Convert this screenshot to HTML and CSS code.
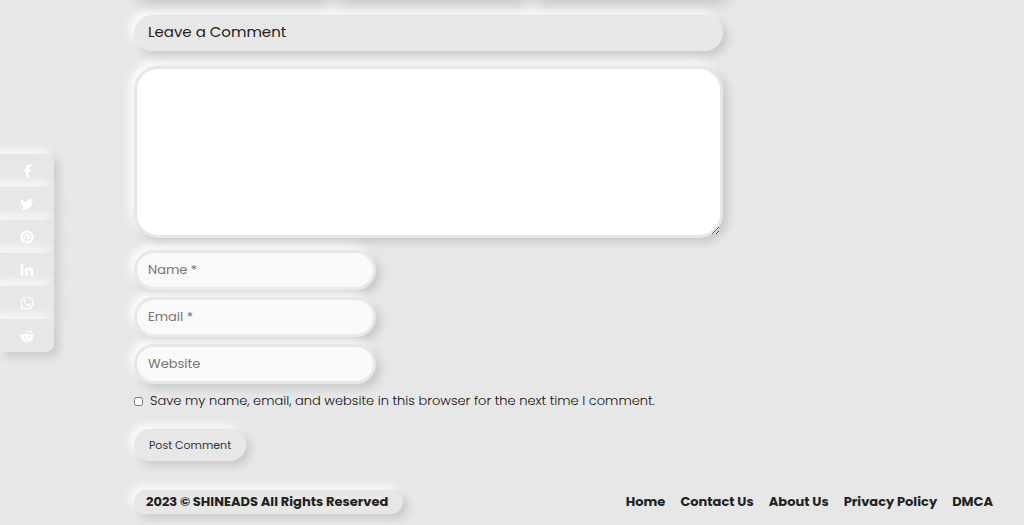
FILE: index.html
```html
<!DOCTYPE html>
<html lang="en">
<head>
    <meta charset="UTF-8">
    <meta name="viewport" content="width=device-width, initial-scale=1.0">
    <title>Leave a Comment - SHINEADS</title>
    <link rel="stylesheet" href="styles.css">
</head>
<body>
    <!-- Share bar -->
    <nav class="share-bar" aria-label="Share">
        <a href="#" class="share-link" aria-label="Facebook">
            <svg viewBox="0 0 32 32"><path d="M20 31V18h5l.8-5.300H20V9.500c0-1.700.8-2.900 3-2.900h3V1.500C24.800 1.200 23.300 1 21.800 1 17.200 1 14 3.500 14 8.300v4.400H8.500V18H14v13z"/></svg>
        </a>
        <a href="#" class="share-link" aria-label="Twitter">
            <svg viewBox="0 0 32 32"><path d="M31 7.200a12 12 0 0 1-3.500 1 6 6 0 0 0 2.700-3.400 12 12 0 0 1-3.900 1.500 6.150 6.150 0 0 0-10.500 5.600A17.500 17.500 0 0 1 3.100 5.500a6.150 6.150 0 0 0 1.900 8.200 6 6 0 0 1-2.800-.8c0 3 2.100 5.600 4.900 6.200a6 6 0 0 1-2.800.1 6.150 6.150 0 0 0 5.800 4.300A12.400 12.400 0 0 1 1 26a17.400 17.400 0 0 0 26.900-15.500A12 12 0 0 0 31 7.200z"/></svg>
        </a>
        <a href="#" class="share-link" aria-label="Pinterest">
            <svg viewBox="0 0 32 32"><path d="M16 1a15 15 0 0 0-6 28.700c-.1-1.100 0-2.400.3-3.600l1.900-8.200s-.5-1-.5-2.400c0-2.200 1.300-3.900 2.900-3.900 1.400 0 2 1 2 2.300 0 1.400-.9 3.400-1.300 5.300-.4 1.600.8 2.900 2.300 2.900 2.800 0 4.700-3.600 4.700-7.900 0-3.200-2.200-5.700-6.200-5.700-4.500 0-7.300 3.400-7.300 7.100 0 1.300.4 2.200 1 2.900.3.300.3.500.2.800l-.3 1.200c-.1.400-.4.500-.7.400-2.100-.9-3.100-3.200-3.100-5.700 0-4.300 3.600-9.400 10.700-9.400 5.700 0 9.500 4.200 9.500 8.600 0 5.900-3.300 10.300-8.100 10.300-1.600 0-3.200-.9-3.700-1.900l-1.100 4.200c-.3 1.200-1 2.400-1.600 3.300A15 15 0 1 0 16 1z"/></svg>
        </a>
        <a href="#" class="share-link" aria-label="LinkedIn">
            <svg viewBox="0 0 32 32"><path d="M1.500 11h6v18h-6zM4.500 2.500a3.300 3.300 0 1 1 0 6.600 3.300 3.300 0 0 1 0-6.600zM11.500 11h5.700v2.500c.9-1.600 2.900-3 5.700-3 6 0 7.600 3.700 7.600 9V29h-6v-8.500c0-2.500-.5-4.900-3.300-4.900-3 0-3.700 2.200-3.700 4.700V29h-6z"/></svg>
        </a>
        <a href="#" class="share-link" aria-label="WhatsApp">
            <svg viewBox="0 0 32 32"><path fill-rule="evenodd" d="M1 31l2.200-7.700A14.900 14.900 0 1 1 8.700 29zM9.300 26.100A12.300 12.300 0 1 0 5.800 22.700l-1.200 4.700z"/><path d="M11.500 8.200c-.4-.7-1.400-.7-2-.1C8.300 9.200 7.700 11 8.500 13c1.700 4.500 5.500 8.500 10.500 10 2 .6 4.500-.6 4.900-2.500.3-1.400 0-1.500-.7-1.900l-3-1.400c-.6-.3-.9-.1-1.300.4l-1.200 1.500c-.3.400-.7.400-1.200.1-2.300-1-4.100-2.700-5.300-4.900-.2-.4-.1-.7.200-1l.9-1.200c.3-.4.3-.7.100-1.200z"/></svg>
        </a>
        <a href="#" class="share-link" aria-label="Reddit">
            <svg viewBox="0 0 32 32"><path fill-rule="evenodd" d="M16 11c3.200 0 6.200.8 8.500 2.200a3.700 3.700 0 1 1 4.700 5.500c.1.500.1 1 .1 1.500C29.300 26 23.300 30 16 30S2.700 26 2.700 20.200c0-.5 0-1 .1-1.500a3.700 3.700 0 1 1 4.700-5.500A16.500 16.500 0 0 1 16 11zM11 16a2.300 2.300 0 1 0 0 4.600 2.300 2.300 0 0 0 0-4.600zm10 0a2.300 2.300 0 1 0 0 4.600 2.300 2.300 0 0 0 0-4.600zM10.500 24c3 3.300 8 3.300 11 0l-1.200-.9c-2.600 2-6 2-8.600 0z"/><circle cx="25.500" cy="6" r="2.800"/><path d="M15.500 11.500l1.800-7.300 6.500 1.300-.3 1.400-5-1-1.300 5.600z"/></svg>
        </a>
    </nav>

    <main class="content">
        <!-- Related posts -->
        <div class="related">
            <div class="related-card"></div>
            <div class="related-card"></div>
            <div class="related-card"></div>
        </div>

        <!-- Comment form -->
        <h3 class="comment-title">Leave a Comment</h3>
        <form class="comment-form">
            <textarea class="field comment-text" aria-label="Comment"></textarea>
            <input class="field" type="text" placeholder="Name *" aria-label="Name">
            <input class="field" type="email" placeholder="Email *" aria-label="Email">
            <input class="field" type="url" placeholder="Website" aria-label="Website">
            <div class="consent">
                <input type="checkbox" id="save-info">
                <label for="save-info">Save my name, email, and website in this browser for the next time I comment.</label>
            </div>
            <button type="submit" class="submit">Post Comment</button>
        </form>
    </main>

    <!-- Footer -->
    <footer class="footer">
        <div class="copyright">2023 © SHINEADS All Rights Reserved</div>
        <nav class="footer-nav">
            <a href="#">Home</a>
            <a href="#">Contact Us</a>
            <a href="#">About Us</a>
            <a href="#">Privacy Policy</a>
            <a href="#">DMCA</a>
        </nav>
    </footer>
</body>
</html>
```
FILE: styles.css
```css
:root {
    --bg: #e7e7e7;
    --text: #222;
    --shadow: 4px 4px 10px rgba(0, 0, 0, 0.15), -4px -4px 10px #fff;
}

* {
    box-sizing: border-box;
}

body {
    margin: 0;
    padding: 0 31px 11px 134px;
    background-color: var(--bg);
    color: var(--text);
    font-family: Poppins, Inter, sans-serif;
    font-size: 13px;
    line-height: 20px;
}

a {
    color: inherit;
    text-decoration: none;
}

.share-bar {
    position: fixed;
    top: 154px;
    left: 0;
    width: 54px;
    border-radius: 0 8px 8px 0;
}

.share-link {
    display: flex;
    align-items: center;
    justify-content: center;
    height: 33px;
    background-color: var(--bg);
    box-shadow: var(--shadow);
}

.share-link:first-child {
    border-top-right-radius: 8px;
}

.share-link:last-child {
    border-bottom-right-radius: 8px;
}

.share-link svg {
    width: 14px;
    height: 14px;
    fill: #fff;
}

.content {
    max-width: 589px;
}

.related {
    display: grid;
    grid-template-columns: repeat(3, 1fr);
    gap: 8px;
    height: 15px;
}

.related-card {
    height: 20px;
    margin-top: -20px;
    border-radius: 8px;
    box-shadow: 4px 4px 14px rgba(0, 0, 0, 0.15);
}

.comment-title {
    margin: 0 0 15px;
    padding: 7px 14px 9px;
    border-radius: 20px;
    background-color: var(--bg);
    box-shadow: var(--shadow);
    font-size: 15px;
    font-weight: 400;
}

.comment-form {
    display: flex;
    flex-direction: column;
    align-items: flex-start;
    gap: 7px;
}

.field {
    width: 242px;
    height: 40px;
    padding: 0 11px;
    border: 3px solid var(--bg);
    border-radius: 20px;
    background-color: #fafafa;
    box-shadow: var(--shadow);
    color: var(--text);
    font: inherit;
}

.field::placeholder {
    color: #757575;
}

.comment-text {
    width: 100%;
    height: 172px;
    margin-bottom: 5px;
    padding: 10px;
    border-radius: 24px;
    background-color: #fff;
}

.consent {
    display: flex;
    align-items: center;
    gap: 7px;
    color: #111;
    font-weight: 300;
}

.consent input {
    width: 9px;
    height: 9px;
    margin: 0;
}

.submit {
    height: 32px;
    margin-top: 11px;
    padding: 0 15px;
    border: none;
    border-radius: 16px;
    background-color: var(--bg);
    box-shadow: var(--shadow);
    color: #333;
    font: inherit;
    font-size: 11px;
}

.footer {
    display: flex;
    align-items: center;
    justify-content: space-between;
    margin-top: 29px;
    font-weight: 700;
}

.copyright {
    padding: 2px 15px 2px 12px;
    border-radius: 12px;
    box-shadow: var(--shadow);
}

.footer-nav {
    display: flex;
    gap: 15px;
}
```
